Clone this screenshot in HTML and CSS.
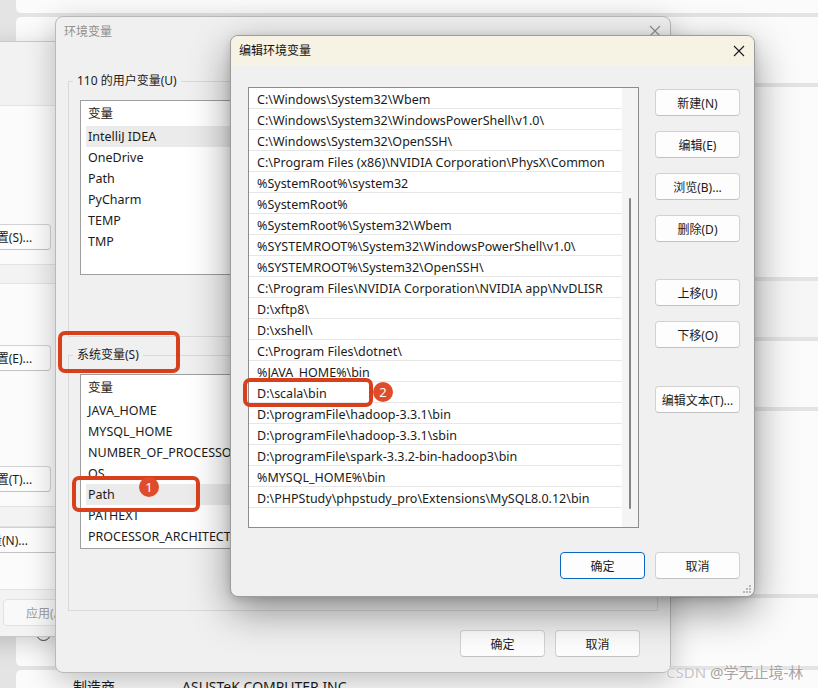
FILE: index.html
```html
<!DOCTYPE html>
<html lang="zh-CN">
<head>
<meta charset="utf-8">
<title>编辑环境变量</title>
<link rel="stylesheet" href="styles.css">
</head>
<body>
<div class="desktop">

  <div class="settings">
    <div class="card c1"></div>
    <div class="card c2"></div>
    <div class="card c3"></div>
    <div class="card c4"></div>
    <div class="card c5"></div>
    <div class="card c6"></div>
    <div class="card c7"><span class="ring"></span></div>
    <div class="card c8"><span class="k">制造商</span><span class="v">ASUSTeK COMPUTER INC.</span></div>
  </div>

  <div class="win sysprop">
    <div class="sp-head"></div>
    <div class="sp-sec s1"><button class="btn">设置(S)...</button></div>
    <div class="sp-gap g1"></div>
    <div class="sp-sec s2"><button class="btn">设置(E)...</button><button class="btn">设置(T)...</button></div>
    <div class="sp-gap g2"></div>
    <div class="sp-sec s3"><button class="btn sp-env">环境变量(N)...</button></div>
    <div class="sp-foot"><button class="btn">确定</button><button class="btn">取消</button><button class="btn dis">应用(A)</button></div>
  </div>

  <div class="win envwin">
    <div class="titlebar inactive">
      <span class="title">环境变量</span>
      <svg class="close" width="12" height="12" viewBox="0 0 12 12"><path d="M1 1L11 11M11 1L1 11" stroke="#8e8e8e" stroke-width="1.1" fill="none"/></svg>
    </div>
    <div class="env-body">
      <fieldset class="group g-user">
        <legend>110 的用户变量(U)</legend>
        <div class="listview">
          <div class="lv-head">变量</div>
          <div class="lv-row sel">IntelliJ IDEA</div>
          <div class="lv-row">OneDrive</div>
          <div class="lv-row">Path</div>
          <div class="lv-row">PyCharm</div>
          <div class="lv-row">TEMP</div>
          <div class="lv-row">TMP</div>
        </div>
      </fieldset>
      <fieldset class="group g-sys">
        <legend>系统变量(S)</legend>
        <div class="listview">
          <div class="lv-head">变量</div>
          <div class="lv-row">JAVA_HOME</div>
          <div class="lv-row">MYSQL_HOME</div>
          <div class="lv-row">NUMBER_OF_PROCESSORS</div>
          <div class="lv-row">OS</div>
          <div class="lv-row sel">Path</div>
          <div class="lv-row">PATHEXT</div>
          <div class="lv-row">PROCESSOR_ARCHITECTURE</div>
        </div>
      </fieldset>
      <div class="env-foot">
        <button class="btn">确定</button>
        <button class="btn">取消</button>
      </div>
    </div>
  </div>

  <div class="win editwin">
    <div class="titlebar active">
      <span class="title">编辑环境变量</span>
      <svg class="close" width="12" height="12" viewBox="0 0 12 12"><path d="M1 1L11 11M11 1L1 11" stroke="#1a1a1a" stroke-width="1.1" fill="none"/></svg>
    </div>
    <div class="edit-body">
      <div class="edit-main">
        <div class="pathlist">
          <div class="pl-rows">
            <div class="pl-row">C:\Windows\System32\Wbem</div>
            <div class="pl-row">C:\Windows\System32\WindowsPowerShell\v1.0\</div>
            <div class="pl-row">C:\Windows\System32\OpenSSH\</div>
            <div class="pl-row">C:\Program Files (x86)\NVIDIA Corporation\PhysX\Common</div>
            <div class="pl-row">%SystemRoot%\system32</div>
            <div class="pl-row">%SystemRoot%</div>
            <div class="pl-row">%SystemRoot%\System32\Wbem</div>
            <div class="pl-row">%SYSTEMROOT%\System32\WindowsPowerShell\v1.0\</div>
            <div class="pl-row">%SYSTEMROOT%\System32\OpenSSH\</div>
            <div class="pl-row">C:\Program Files\NVIDIA Corporation\NVIDIA app\NvDLISR</div>
            <div class="pl-row">D:\xftp8\</div>
            <div class="pl-row">D:\xshell\</div>
            <div class="pl-row">C:\Program Files\dotnet\</div>
            <div class="pl-row">%JAVA_HOME%\bin</div>
            <div class="pl-row">D:\scala\bin</div>
            <div class="pl-row">D:\programFile\hadoop-3.3.1\bin</div>
            <div class="pl-row">D:\programFile\hadoop-3.3.1\sbin</div>
            <div class="pl-row">D:\programFile\spark-3.3.2-bin-hadoop3\bin</div>
            <div class="pl-row">%MYSQL_HOME%\bin</div>
            <div class="pl-row">D:\PHPStudy\phpstudy_pro\Extensions\MySQL8.0.12\bin</div>
          </div>
          <div class="pl-scroll"><div class="thumb"></div></div>
        </div>
        <div class="side-btns">
          <button class="btn">新建(N)</button>
          <button class="btn">编辑(E)</button>
          <button class="btn">浏览(B)...</button>
          <button class="btn">删除(D)</button>
          <button class="btn gap-a">上移(U)</button>
          <button class="btn">下移(O)</button>
          <button class="btn gap-b">编辑文本(T)...</button>
        </div>
      </div>
      <div class="edit-foot">
        <button class="btn default">确定</button>
        <button class="btn">取消</button>
      </div>
    </div>
    <svg class="grip" width="10" height="10" viewBox="0 0 10 10">
      <rect x="7" y="1" width="2" height="2" fill="#b8b8b8"/>
      <rect x="4" y="4" width="2" height="2" fill="#b8b8b8"/>
      <rect x="7" y="4" width="2" height="2" fill="#b8b8b8"/>
      <rect x="1" y="7" width="2" height="2" fill="#b8b8b8"/>
      <rect x="4" y="7" width="2" height="2" fill="#b8b8b8"/>
      <rect x="7" y="7" width="2" height="2" fill="#b8b8b8"/>
    </svg>
  </div>

  <div class="anno a-sys"></div>
  <div class="anno a-path"></div>
  <div class="anno a-scala"></div>
  <div class="badge b1">1</div>
  <div class="badge b2">2</div>

  <div class="watermark"><span class="wm-c">CSDN</span> <span class="wm-u">@学无止境-林</span></div>
</div>
</body>
</html>
```

FILE: styles.css
```css
* { box-sizing: border-box; }

body {
  margin: 0;
  font-family: "Noto Sans", "Noto Sans CJK SC", sans-serif;
  font-size: 12px;
  color: #1b1b1b;
}

.desktop {
  position: relative;
  width: 818px;
  height: 688px;
  overflow: hidden;
  background: #e4e4e4;
}

/* ---------- background settings page ---------- */
.settings {
  display: flex;
  flex-direction: column;
  gap: 2px;
  padding-left: 15px;
  height: 100%;
}
.card {
  flex: none;
  background: #fbfbfb;
  border: 1px solid #e3e3e3;
  border-radius: 6px;
  width: 820px;
}
.c1 { margin-top: -10px; height: 24px; }
.c2 { height: 68px; }
.c3 { height: 192px; }
.c4 { height: 58px; background: #f6f6f6; }
.c5 { height: 68px; }
.c6 { height: 185px; }
.c7 { height: 70px; padding: 28px 0 0 20px; }
.c8 { height: 80px; padding: 7px 0 0 57px; font-size: 14px; line-height: 20px; color: #1b1b1b; }
.ring {
  display: block;
  width: 15px;
  height: 15px;
  border: 1.5px solid #444;
  border-radius: 50%;
}
.c8 .k { display: inline-block; width: 109px; }

/* ---------- window chrome ---------- */
.win {
  position: absolute;
  display: flex;
  flex-direction: column;
  border-radius: 8px;
  overflow: hidden;
}
.titlebar {
  flex: none;
  height: 30px;
  display: flex;
  align-items: center;
  justify-content: space-between;
  padding: 0 9px 0 8px;
}
.titlebar .title { font-size: 12px; }
.titlebar.inactive { height: 27px; }
.titlebar.inactive .title { color: #8f8f8f; }
.titlebar.active { background: #f6f2e4; }
.titlebar.active .title { color: #111; padding-bottom: 2px; }

.btn {
  font-family: inherit;
  font-size: 12px;
  color: #1b1b1b;
  height: 27px;
  width: 85px;
  padding: 0;
  background: #fdfdfd;
  border: 1px solid #d2d2d2;
  border-bottom-color: #c2c2c2;
  border-radius: 4px;
  flex: none;
}
.btn.default { border: 1px solid #0a67c2; }
.btn.dis { color: #9c9c9c; background: #f9f9f9; border-color: #e2e2e2; }

/* ---------- system properties window (left, partially hidden) ---------- */
.sysprop {
  left: -200px;
  top: 41px;
  width: 340px;
  height: 596px;
  background: #f3f3f3;
  border: 1px solid #c9c9c9;
  box-shadow: 0 6px 24px rgba(0,0,0,0.18);
}
.sp-head { flex: none; height: 63px; background: #f2f2f2; }
.sp-sec {
  flex: none;
  background: #fbfbfb;
  border-top: 1px solid #e3e3e3;
  border-bottom: 1px solid #e3e3e3;
  display: flex;
  flex-direction: column;
  align-items: flex-end;
  padding-right: 88px;
}
.sp-sec .btn { height: 26px; }
.s1 { height: 160px; padding-top: 118px; }
.s2 { height: 224px; padding-top: 61px; gap: 95px; }
.s3 { height: 64px; padding-right: 83px; }
.sp-env { width: 130px; border-radius: 0; border-left: none; border-right: none; background: #fbfbfb; }
.sp-gap { flex: none; background: #f3f3f3; }
.g1 { height: 18px; }
.g2 { height: 19px; }
.sp-foot {
  flex: 1;
  display: flex;
  justify-content: flex-end;
  gap: 8px;
  padding: 9px 51px 0 0;
  background: #f3f3f3;
}

/* ---------- 环境变量 window ---------- */
.envwin {
  left: 55px;
  top: 16px;
  width: 616px;
  height: 657px;
  background: #f0f0f0;
  border: 1px solid #b9b9b9;
  box-shadow: 0 8px 30px rgba(0,0,0,0.24);
}
.env-body {
  flex: 1;
  display: flex;
  flex-direction: column;
  padding: 0 12px;
}
.group {
  margin: 0;
  border: 1px solid #d9d9d9;
  border-radius: 0;
  padding: 11px 11px 61px 11px;
  min-width: 0;
}
.group legend {
  font-size: 12px;
  line-height: 16px;
  padding: 0 4px;
  margin-left: -7px;
  color: #1b1b1b;
}
.g-user { margin-top: 29px; }
.g-sys { margin-top: 10px; }
.listview {
  height: 175px;
  background: #fff;
  border: 1px solid #9e9e9e;
  overflow: hidden;
  font-size: 12.5px;
}
.lv-head {
  height: 25px;
  line-height: 25px;
  padding-left: 7px;
}
.lv-row {
  height: 21px;
  line-height: 21px;
  margin-left: 5px;
  padding-left: 2px;
  white-space: nowrap;
}
.lv-row.sel { background: #ebebeb; }
.env-foot {
  display: flex;
  justify-content: flex-end;
  gap: 10px;
  margin: 19px 18px 0 0;
}

/* ---------- 编辑环境变量 dialog ---------- */
.editwin {
  left: 230px;
  top: 35px;
  width: 525px;
  height: 562px;
  background: #f0f0f0;
  border: 1px solid #9c9c9c;
  box-shadow: 0 14px 40px rgba(0,0,0,0.42), 0 2px 8px rgba(0,0,0,0.14);
}
.edit-body {
  flex: 1;
  display: flex;
  flex-direction: column;
  padding: 21px 14px 17px 17px;
}
.edit-main {
  display: flex;
  gap: 16px;
}
.pathlist {
  flex: none;
  width: 391px;
  height: 441px;
  background: #fff;
  border: 1px solid #8c8c8c;
  display: flex;
}
.pl-rows { width: 373px; flex: none; }
.pl-row {
  height: 21px;
  font-size: 12.5px;
  line-height: 17px;
  padding: 3px 0 0 8px;
  border-bottom: 1px solid #e6e6e6;
  white-space: nowrap;
  overflow: hidden;
}
.pl-scroll {
  flex: 1;
  background: #f4f4f4;
  padding: 110px 0 0 7px;
}
.thumb {
  width: 2px;
  height: 311px;
  background: #858585;
  border-radius: 1px;
}
.side-btns {
  display: flex;
  flex-direction: column;
  gap: 15px;
  padding-top: 2px;
}
.side-btns .gap-a { margin-top: 22px; }
.side-btns .gap-b { margin-top: 23px; }
.edit-foot {
  margin-top: auto;
  display: flex;
  justify-content: flex-end;
  gap: 10px;
}
.grip {
  position: absolute;
  right: 2px;
  bottom: 2px;
}

/* ---------- annotations ---------- */
.anno {
  position: absolute;
  border: 4px solid #d8401c;
  border-radius: 7px;
}
.a-sys { left: 58px; top: 331px; width: 122px; height: 42px; }
.a-path { left: 72px; top: 476px; width: 128px; height: 36px; }
.a-scala { left: 243px; top: 378px; width: 130px; height: 29px; }
.badge {
  position: absolute;
  width: 20px;
  height: 20px;
  border-radius: 50%;
  background: #df4c2b;
  color: #fff;
  font-size: 13px;
  line-height: 20px;
  text-align: center;
}
.b1 { left: 139px; top: 477px; }
.b2 { left: 373px; top: 382px; }

.watermark {
  position: absolute;
  left: 666px;
  top: 662px;
  font-size: 15px;
  line-height: 20px;
  white-space: nowrap;
  text-shadow: 0 0 2px #fff, 0 0 1px #fff;
}
.wm-c { color: #c4c4c4; }
.wm-u { color: #a3a3a3; }
```
